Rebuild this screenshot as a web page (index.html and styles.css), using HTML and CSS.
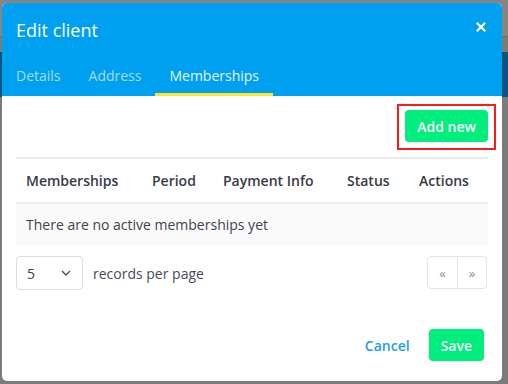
FILE: index.html
```html
<!DOCTYPE html>
<html lang="en">

<head>
    <meta charset="UTF-8">
    <meta name="viewport" content="width=device-width, initial-scale=1.0">
    <title>Edit client</title>
    <link rel="stylesheet" href="styles.css">
</head>

<body>
    <div class="backdrop">
        <div class="backdrop-top"></div>
        <div class="backdrop-band"></div>
    </div>

    <div class="modal">
        <div class="modal-header">
            <div class="modal-title-row">
                <div class="modal-title">Edit client</div>
                <span class="close">
                    <svg width="10" height="10" viewBox="0 0 10 10">
                        <path d="M1.5 1.5 L8.5 8.5 M8.5 1.5 L1.5 8.5" stroke="#fff" stroke-width="2.2" stroke-linecap="square" fill="none"/>
                    </svg>
                </span>
            </div>
            <div class="tabs">
                <div class="tab">Details</div>
                <div class="tab">Address</div>
                <div class="tab active">Memberships</div>
            </div>
        </div>

        <div class="modal-body">
            <div class="toolbar">
                <button class="btn btn-green highlight">Add new</button>
            </div>

            <table class="table">
                <thead>
                    <tr>
                        <th class="col-name">Memberships</th>
                        <th class="col-period">Period</th>
                        <th class="col-payment">Payment Info</th>
                        <th class="col-status">Status</th>
                        <th class="col-actions">Actions</th>
                    </tr>
                </thead>
                <tbody>
                    <tr class="empty">
                        <td colspan="5">There are no active memberships yet</td>
                    </tr>
                </tbody>
            </table>

            <div class="table-footer">
                <div class="per-page">
                    <div class="select">
                        <span>5</span>
                        <svg width="10" height="6" viewBox="0 0 10 6">
                            <path d="M1 1 L5 5 L9 1" stroke="#4a5060" stroke-width="1.4" fill="none"/>
                        </svg>
                    </div>
                    <span class="per-page-label">records per page</span>
                </div>
                <div class="pager">
                    <span class="pager-btn">&laquo;</span>
                    <span class="pager-btn">&raquo;</span>
                </div>
            </div>
        </div>

        <div class="modal-footer">
            <span class="btn-link">Cancel</span>
            <button class="btn btn-green">Save</button>
        </div>
    </div>
</body>

</html>
```

FILE: styles.css
```css
* {
    margin: 0;
    padding: 0;
    box-sizing: border-box;
}

body {
    background-color: #7b7b7b;
    font-family: "Open Sans", "Noto Sans", sans-serif;
    color: #3a3f4b;
    width: 508px;
    height: 384px;
    overflow: hidden;
    position: relative;
}

.backdrop-top {
    height: 37px;
    background-color: #858585;
    border-bottom: 1px solid #6e6e6e;
}

.backdrop-band {
    margin-top: 15px;
    height: 45px;
    background-color: #07567f;
}

.modal {
    position: absolute;
    left: 2px;
    top: 3px;
    width: 500px;
    height: 378px;
    background-color: #fff;
    border-radius: 5px;
    overflow: hidden;
}

.modal-header {
    background-color: #00a0f0;
    padding-top: 15px;
}

.modal-title-row {
    display: flex;
    justify-content: space-between;
    align-items: flex-start;
    padding: 0 16px 0 14px;
}

.modal-title {
    color: #fff;
    font-size: 18px;
    line-height: 24px;
}

.close {
    display: flex;
    margin-top: 4px;
}

.tabs {
    display: flex;
    margin-top: 24px;
}

.tab {
    font-size: 14px;
    line-height: 20px;
    color: #a6dcfa;
    padding: 0 14px 7px;
    border-bottom: 3px solid transparent;
}

.tab.active {
    color: #e6f6ff;
    border-bottom-color: #ffe52e;
}

.modal-body {
    padding: 14px 14px 0;
}

.toolbar {
    display: flex;
    justify-content: flex-end;
    margin-bottom: 15px;
}

.btn {
    border: none;
    border-radius: 4px;
    font-family: inherit;
    font-size: 14px;
    font-weight: 600;
    height: 32px;
    padding: 0 12px;
}

.btn-green {
    background-color: #00ee7e;
    color: #fff;
}

/* red annotation box around the button */
.highlight {
    position: relative;
}

.highlight::after {
    content: '';
    position: absolute;
    top: -6px;
    left: -8px;
    right: -8px;
    bottom: -8px;
    border: 2px solid #ff1a1a;
}

.table {
    width: 100%;
    border-collapse: collapse;
    font-size: 14px;
}

.table th {
    text-align: left;
    font-weight: 600;
    color: #363b47;
    height: 45px;
    padding: 0 10px;
    border-top: 2px solid #ececec;
    border-bottom: 2px solid #ececec;
}

.col-name { width: 126px; }
.col-period { width: 71px; }
.col-payment { width: 124px; }
.col-status { width: 72px; }

.empty td {
    background-color: #fafafa;
    height: 42px;
    padding: 0 10px;
    color: #3e4350;
}

.table-footer {
    display: flex;
    justify-content: space-between;
    align-items: flex-start;
    margin-top: 11px;
}

.per-page {
    display: flex;
    align-items: center;
    gap: 10px;
}

.select {
    width: 67px;
    height: 34px;
    border: 1px solid #d9dde4;
    border-radius: 4px;
    display: flex;
    align-items: center;
    justify-content: space-between;
    padding: 0 11px 0 10px;
    font-size: 14px;
}

.per-page-label {
    font-size: 14px;
    color: #474c58;
}

.pager {
    display: flex;
    border: 1px solid #e2e4e8;
    border-radius: 4px;
    height: 33px;
    margin-right: 1px;
}

.pager-btn {
    width: 29px;
    display: flex;
    align-items: center;
    justify-content: center;
    color: #7f8da8;
    font-size: 13px;
}

.pager-btn + .pager-btn {
    border-left: 1px solid #e2e4e8;
}

.modal-footer {
    display: flex;
    justify-content: flex-end;
    align-items: center;
    gap: 19px;
    padding: 39px 18px 0 14px;
}

.btn-link {
    color: #1c9cf0;
    font-size: 14px;
    font-weight: 600;
}
```
